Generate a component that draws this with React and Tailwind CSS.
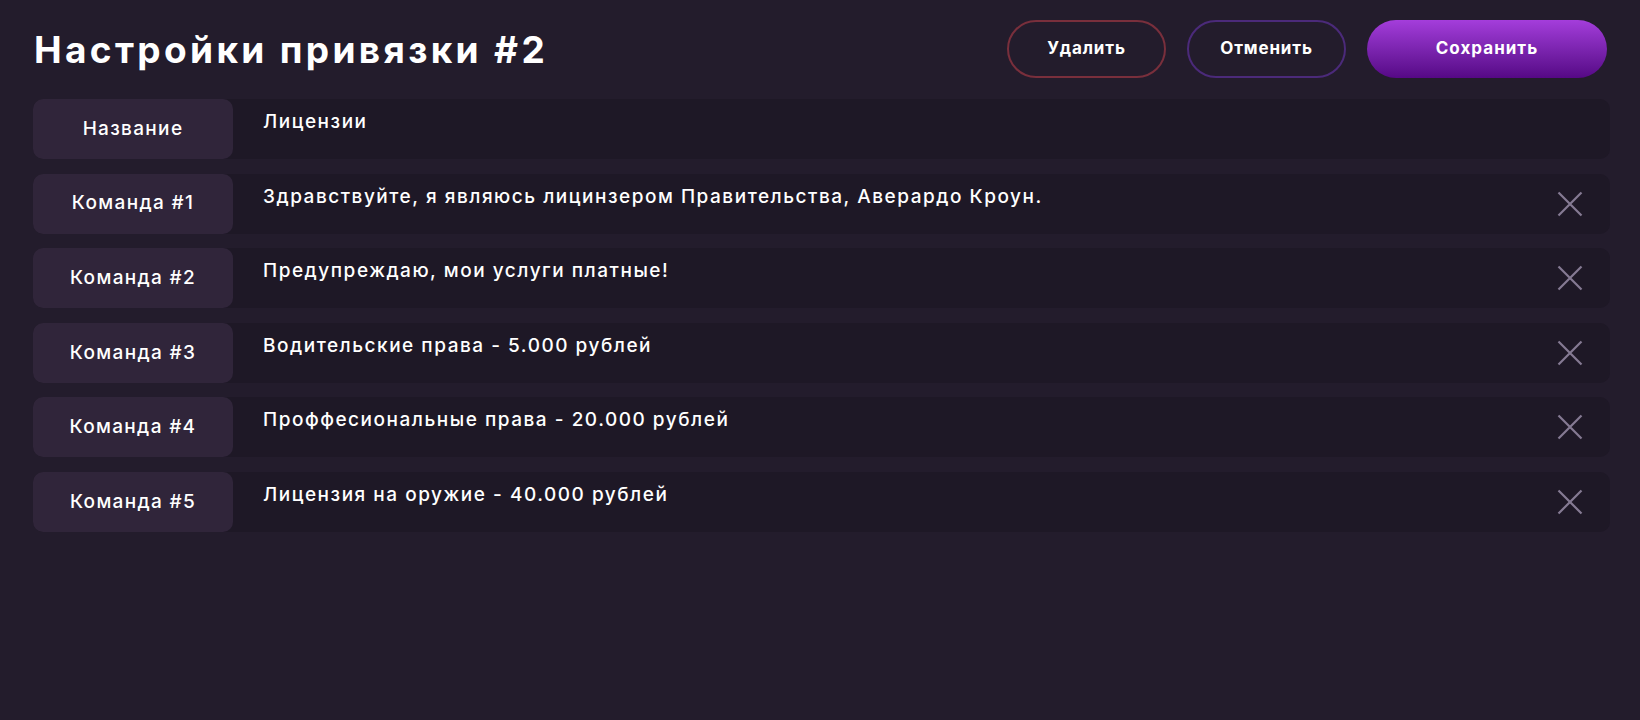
import React, { useState } from "react";

const ROWS = [
  { label: "Название", value: "Лицензии", removable: false },
  { label: "Команда #1", value: "Здравствуйте, я являюсь лицинзером Правительства, Аверардо Кроун.", removable: true },
  { label: "Команда #2", value: "Предупреждаю, мои услуги платные!", removable: true },
  { label: "Команда #3", value: "Водительские права - 5.000 рублей", removable: true },
  { label: "Команда #4", value: "Проффесиональные права - 20.000 рублей", removable: true },
  { label: "Команда #5", value: "Лицензия на оружие - 40.000 рублей", removable: true },
];

function CloseIcon() {
  return (
    <svg width="26" height="26" viewBox="0 0 26 26" fill="none">
      <path d="M1.5 1.5L24.5 24.5M24.5 1.5L1.5 24.5" stroke="#857a93" strokeWidth="2.2" />
    </svg>
  );
}

function Row({ row, onRemove }) {
  return (
    <div className="flex h-[60px] rounded-[10px] bg-[#1e1826]">
      <div className="w-[200px] shrink-0 flex items-center justify-center rounded-[10px] bg-[#30253a] text-[19px] font-medium tracking-[0.07em] text-white">
        {row.label}
      </div>
      <div className="flex-1 min-w-0 pl-[30px] pt-[11px] text-[19px] leading-[24px] font-medium tracking-[0.08em] text-white truncate">
        {row.value}
      </div>
      {row.removable && (
        <button onClick={onRemove} className="shrink-0 w-[80px] flex items-center justify-center">
          <CloseIcon />
        </button>
      )}
    </div>
  );
}

export default function App() {
  const [rows, setRows] = useState(ROWS);

  return (
    <div className="min-h-[720px] w-full bg-[#231c2c] pl-[33px] pr-[30px] pt-[20px]" style={{ fontFamily: "Inter, 'Noto Sans', sans-serif" }}>
      {/* Шапка */}
      <div className="flex items-center justify-between h-[58px]">
        <h1 className="text-[37px] font-bold text-white tracking-[0.09em] leading-none pl-[1px]">Настройки привязки #2</h1>
        <div className="flex items-center gap-[21px] pr-[3px]">
          <button className="w-[159px] h-[58px] rounded-full border-2 border-[#792f3c] text-white text-[17px] font-bold tracking-[0.05em]">
            Удалить
          </button>
          <button className="w-[159px] h-[58px] rounded-full border-2 border-[#4b2a7a] text-white text-[17px] font-bold tracking-[0.05em]">
            Отменить
          </button>
          <button className="w-[240px] h-[58px] rounded-full bg-gradient-to-b from-[#a43ddb] to-[#560886] text-white text-[17px] font-bold tracking-[0.06em]">
            Сохранить
          </button>
        </div>
      </div>

      {/* Строки */}
      <div className="mt-[21px] flex flex-col gap-[14.6px]">
        {rows.map((row, i) => (
          <Row key={row.label} row={row} onRemove={() => setRows(rows.filter((_, j) => j !== i))} />
        ))}
      </div>
    </div>
  );
}
